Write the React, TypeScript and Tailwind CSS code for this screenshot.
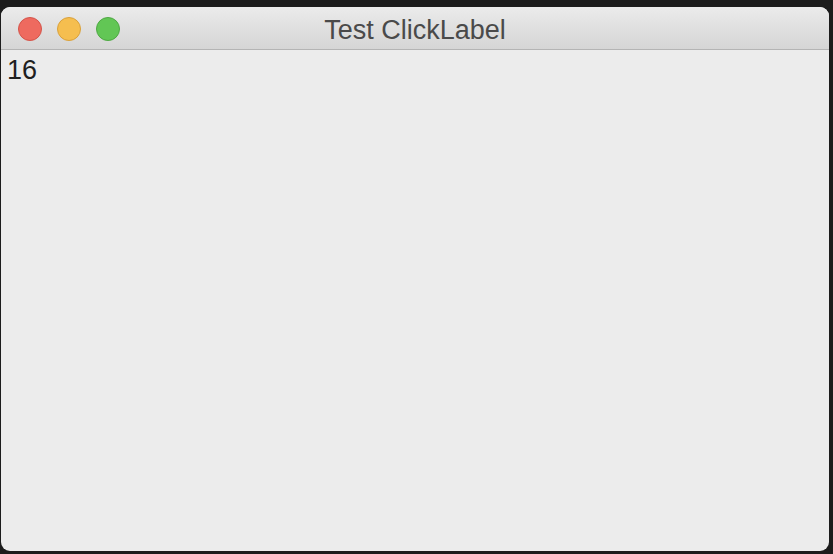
import React from 'react';

const SANS = { fontFamily: '"Liberation Sans", Arial, sans-serif' };

function Light({ color, ring }: { color: string; ring: string }) {
  return <span className={`block h-[24px] w-[24px] rounded-full border ${color} ${ring}`} />;
}

export default function App() {
  return (
    <div className="flex h-[554px] w-[833px] flex-col overflow-hidden bg-[#1c1c1c] pl-[1px] pt-[7px]" style={SANS}>
      <div className="flex h-[544px] w-[828px] shrink-0 flex-col overflow-hidden rounded-[9px] bg-[#ececec]">
        <div className="relative flex h-[43px] shrink-0 items-center border-b border-[#b4b4b4] bg-gradient-to-b from-[#ebebeb] to-[#d5d5d5] pl-[17px] pt-[1px]">
          <div className="flex items-center gap-[15px]">
            <Light color="bg-[#ee6a5f]" ring="border-[#d4544a]" />
            <Light color="bg-[#f5be4f]" ring="border-[#d9a13c]" />
            <Light color="bg-[#62c655]" ring="border-[#4ea843]" />
          </div>
          <div className="absolute inset-0 flex items-center justify-center pt-[4px] text-[27px] text-[#4a4a4a]">
            Test ClickLabel
          </div>
        </div>
        <div className="px-[6px] pt-[4px] text-[27px] leading-[32px] text-[#1f1f1f]">16</div>
      </div>
    </div>
  );
}
